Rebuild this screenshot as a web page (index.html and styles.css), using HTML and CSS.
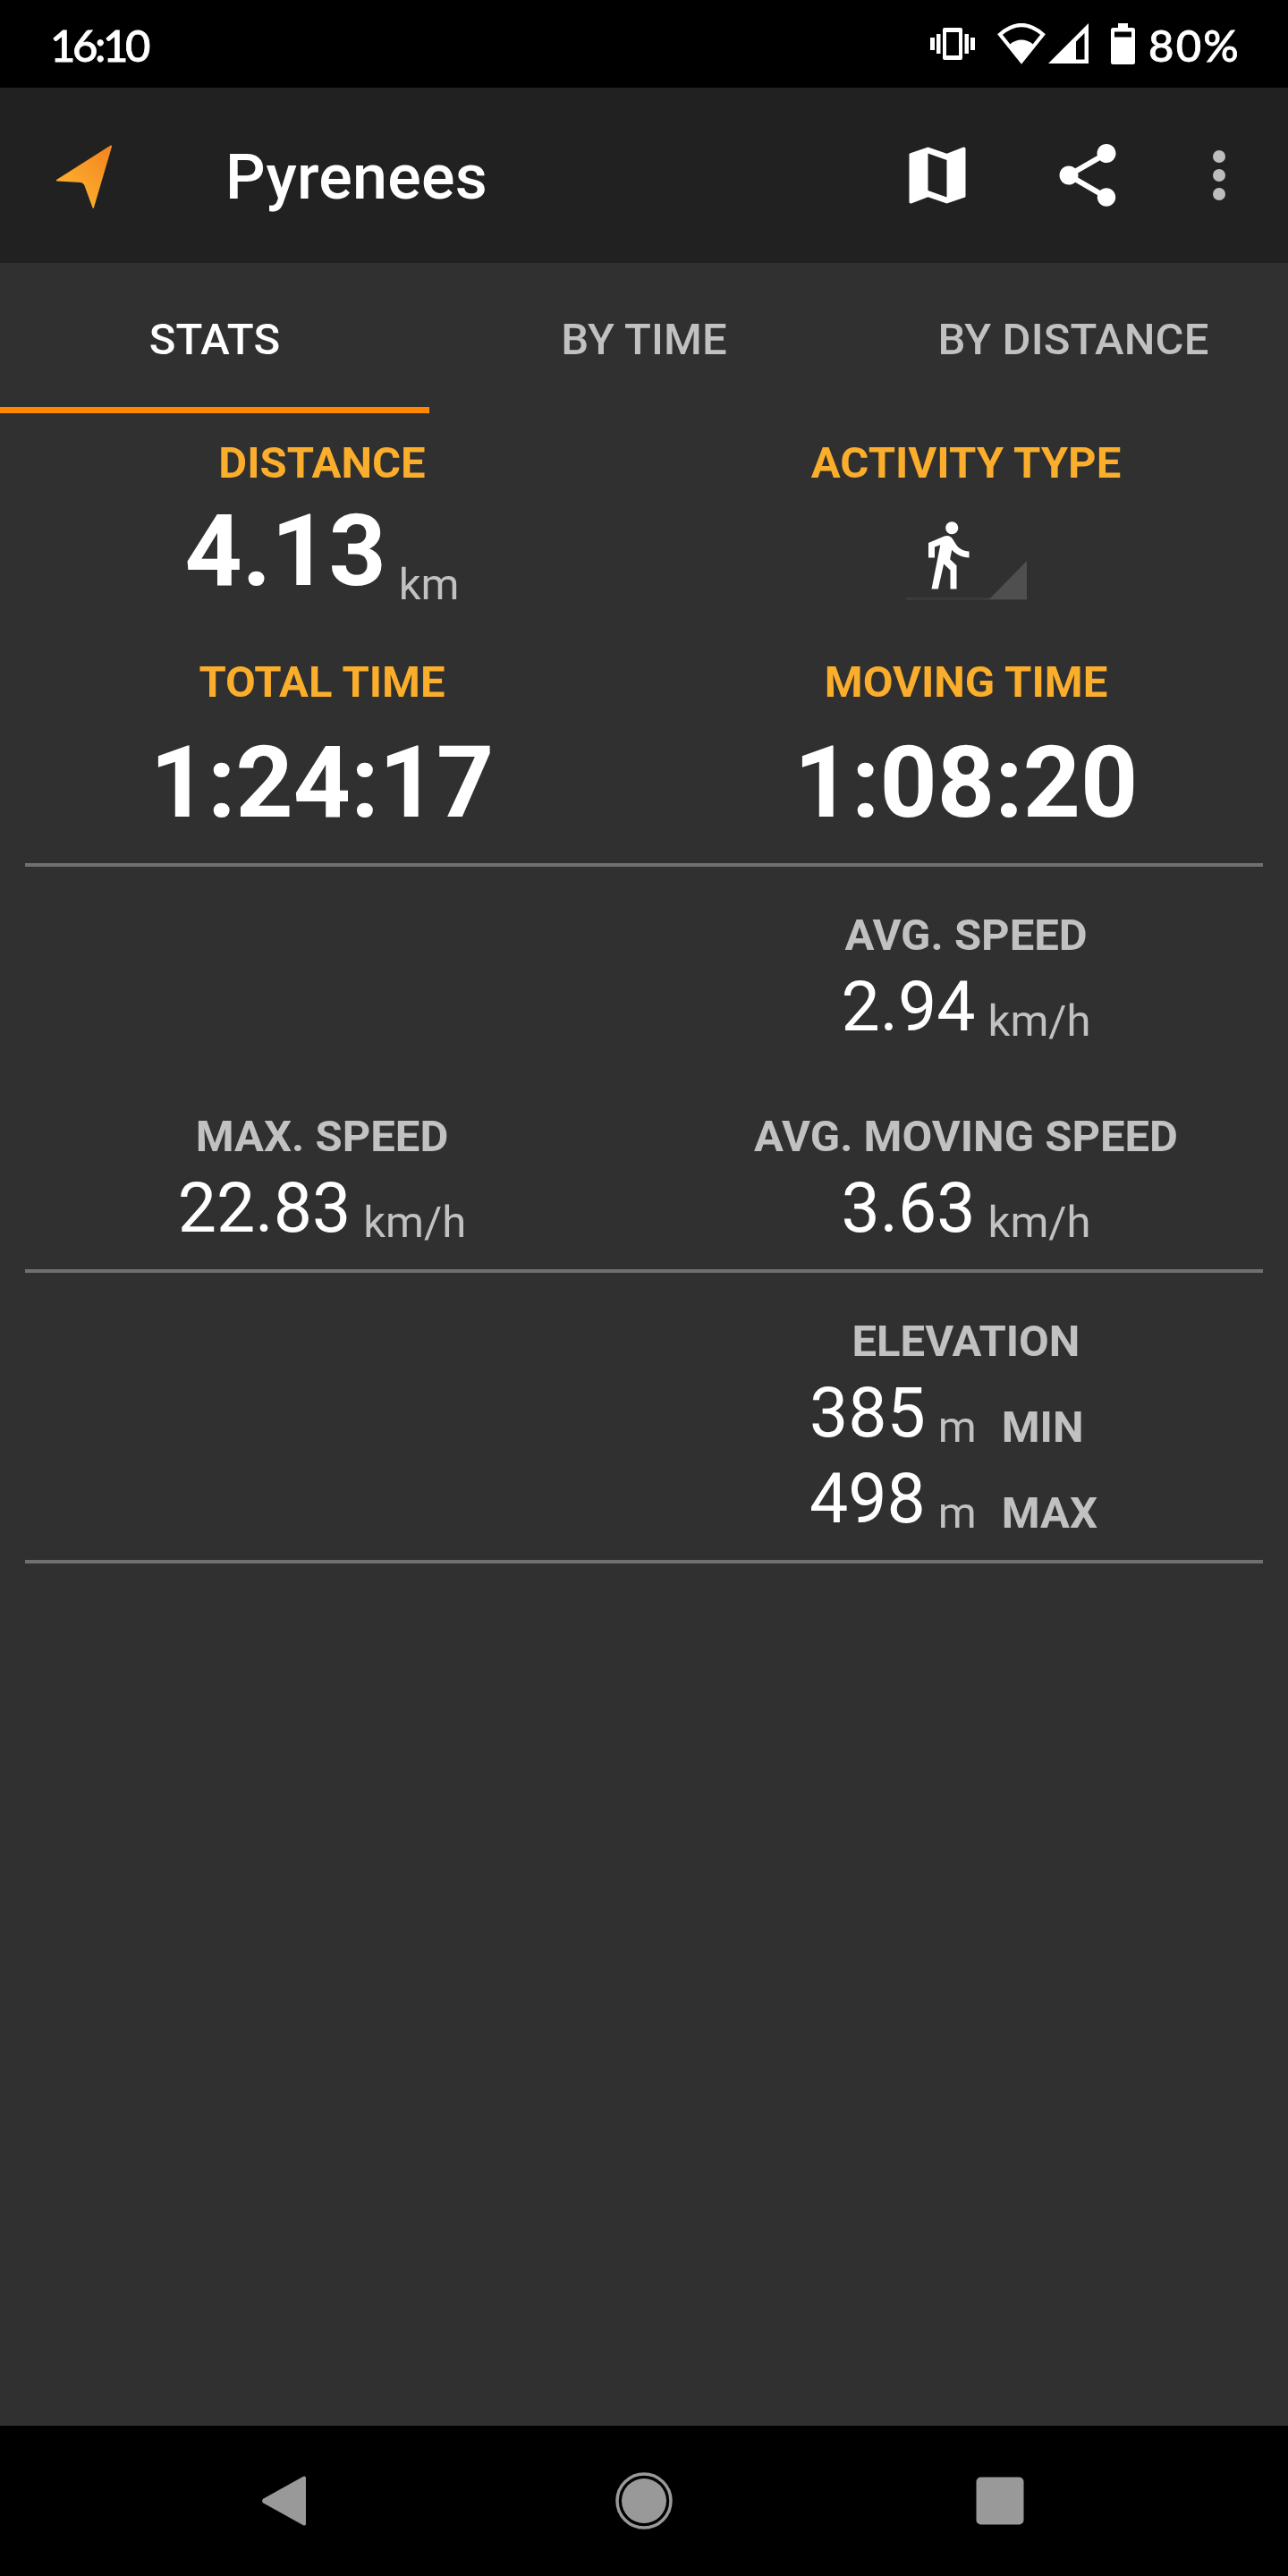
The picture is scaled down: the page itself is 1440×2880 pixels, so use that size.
FILE: index.html
```html
<!DOCTYPE html>
<html lang="en">
<head>
<meta charset="utf-8">
<title>Pyrenees</title>
<link rel="stylesheet" href="styles.css">
</head>
<body>
<div class="screen">
  <div class="status-bar">
    <span class="clock">16:10</span>
    <div class="status-icons">
      <svg class="icon-vibrate" width="50" height="36" viewBox="0 0 50 36" fill="#fff">
        <path fill-rule="evenodd" d="M16 0h18q2 0 2 2v32q0 2-2 2H16q-2 0-2-2V2q0-2 2-2zM18 5v26h14V5z"/>
        <path d="M0 11h5v14H0zM7 7h4.500v22H7zM38.500 7H43v22h-4.500zM45 11h5v14h-5z"/>
      </svg>
      <svg class="icon-wifi" width="54" height="46" viewBox="0 0 54 46">
        <path d="M3 12.500Q27-8.500 51 12.500L27 42.500z" fill="none" stroke="#fff" stroke-width="4.200"/>
        <path d="M14 23.500Q27 13.500 40 23.500L27 43z" fill="#fff"/>
      </svg>
      <svg class="icon-signal" width="45" height="45" viewBox="0 0 45 45">
        <path fill="#fff" fill-rule="evenodd" d="M45 0v45H0zM40.500 11L31 20.500V40.500h9.500z"/>
      </svg>
      <svg class="icon-battery" width="27" height="46" viewBox="0 0 27 46">
        <path fill="#fff" fill-rule="evenodd" d="M8 0h11v5h5.500Q27 5 27 7.500V43.500Q27 46 24.500 46h-22Q0 46 0 43.500v-36Q0 5 2.500 5H8zM4 9.500v6h19v-6z"/>
      </svg>
      <span class="battery-level">80%</span>
    </div>
  </div>

  <header class="app-bar">
    <svg class="icon-arrow" width="64" height="72" viewBox="0 0 64 72">
      <defs>
        <linearGradient id="arrow-fill" x1="1" y1="0" x2="0.350" y2="0.800">
          <stop offset="0" stop-color="#f5821f"/>
          <stop offset="1" stop-color="#fbad2e"/>
        </linearGradient>
      </defs>
      <path fill="url(#arrow-fill)" d="M61.300.800Q63.500-.300 63 2L43 70Q42.200 71.800 41.400 70L33 47Q31.800 42.500 28 42L2 40.500Q0 40 1.500 38.700z"/>
    </svg>
    <h1 class="title">Pyrenees</h1>
    <div class="actions">
      <svg width="84" height="84" viewBox="0 0 24 24" fill="#fff"><path d="M20.500 3l-.16.030L15 5.100 9 3 3.360 4.900c-.210.070-.360.250-.360.480V20.500c0 .280.220.500.500.500l.160-.030L9 18.900l6 2.100 5.640-1.900c.210-.070.360-.250.360-.480V3.500c0-.280-.220-.500-.500-.500zM15 19l-6-2.110V5l6 2.110V19z"/></svg>
      <svg width="84" height="84" viewBox="0 0 24 24" fill="#fff"><path d="M18 16.080c-.760 0-1.440.300-1.960.770L8.910 12.700c.050-.230.090-.460.090-.700s-.040-.470-.090-.700l7.050-4.110c.540.500 1.250.810 2.040.810 1.660 0 3-1.340 3-3s-1.340-3-3-3-3 1.340-3 3c0 .240.040.470.090.700L8.040 9.810C7.500 9.310 6.790 9 6 9c-1.660 0-3 1.340-3 3s1.340 3 3 3c.790 0 1.500-.310 2.040-.810l7.120 4.160c-.050.210-.080.430-.080.650 0 1.610 1.310 2.920 2.920 2.920 1.610 0 2.920-1.310 2.920-2.920s-1.310-2.920-2.920-2.920z"/></svg>
      <svg class="icon-more" width="14" height="56" viewBox="0 0 14 56" fill="#bdbdbd"><circle cx="7" cy="7" r="7"/><circle cx="7" cy="28" r="7"/><circle cx="7" cy="49" r="7"/></svg>
    </div>
  </header>

  <nav class="tabs">
    <span class="tab active">STATS</span>
    <span class="tab">BY TIME</span>
    <span class="tab">BY DISTANCE</span>
  </nav>

  <main class="stats">
    <section class="group primary">
      <div class="cell">
        <div class="label">DISTANCE</div>
        <div class="reading large"><span class="value">4.13</span><span class="unit">km</span></div>
      </div>
      <div class="cell">
        <div class="label">ACTIVITY TYPE</div>
        <div class="spinner">
          <svg class="walk" width="84" height="84" viewBox="0 0 24 24" fill="#fff"><path d="M13.500 5.500c1.100 0 2-.900 2-2s-.900-2-2-2-2 .900-2 2 .900 2 2 2zM9.800 8.900L7 23h2.100l1.800-8 2.100 2v6h2v-7.500l-2.100-2 .600-3C14.800 12 16.800 13 19 13v-2c-1.900 0-3.500-1-4.300-2.400l-1-1.600c-.400-.600-1-1-1.700-1-.300 0-.500.100-.800.100L6 8.300V13h2V9.600l1.800-.700"/></svg>
          <svg class="corner" width="42" height="43" viewBox="0 0 42 43" fill="#4f4f4f"><path d="M42 0v43H0z"/></svg>
        </div>
      </div>
      <div class="cell">
        <div class="label">TOTAL TIME</div>
        <div class="time">1:24:17</div>
      </div>
      <div class="cell">
        <div class="label">MOVING TIME</div>
        <div class="time">1:08:20</div>
      </div>
    </section>
    <hr class="divider">

    <section class="group">
      <div class="cell second">
        <div class="label">AVG. SPEED</div>
        <div class="reading"><span class="value">2.94</span><span class="unit">km/h</span></div>
      </div>
      <div class="cell">
        <div class="label">MAX. SPEED</div>
        <div class="reading"><span class="value">22.83</span><span class="unit">km/h</span></div>
      </div>
      <div class="cell">
        <div class="label">AVG. MOVING SPEED</div>
        <div class="reading"><span class="value">3.63</span><span class="unit">km/h</span></div>
      </div>
    </section>
    <hr class="divider">

    <section class="group">
      <div class="cell second">
        <div class="label">ELEVATION</div>
        <div class="range">
          <div class="reading"><span class="value">385</span><span class="unit">m</span><span class="bound">MIN</span></div>
          <div class="reading"><span class="value">498</span><span class="unit">m</span><span class="bound">MAX</span></div>
        </div>
      </div>
    </section>
    <hr class="divider">
  </main>

  <footer class="nav-bar">
    <svg width="64" height="64" viewBox="0 0 64 64"><path fill="#999" d="M4.500 29.500L49 4.800Q52 3.500 52 6.500v51Q52 60.500 49 59.200L4.500 34.500Q1.500 32 4.500 29.500z"/></svg>
    <svg width="64" height="64" viewBox="0 0 64 64"><circle cx="32" cy="32" r="30" fill="none" stroke="#999" stroke-width="3.500"/><circle cx="32" cy="32" r="25" fill="#999"/></svg>
    <svg width="64" height="64" viewBox="0 0 64 64"><rect x="5.500" y="5.500" width="53" height="53" rx="5" fill="#999"/></svg>
  </footer>
</div>
</body>
</html>
```
FILE: styles.css
```css
* {
  box-sizing: border-box;
}

body {
  margin: 0;
  background: #303030;
  color: #fff;
  font-family: Roboto, sans-serif;
}

svg {
  display: block;
  flex: none;
}

.screen {
  display: flex;
  flex-direction: column;
  width: 1440px;
  height: 2880px;
}

/* system status bar */
.status-bar {
  display: flex;
  justify-content: space-between;
  height: 98px;
  padding: 20px 53px 0 56px;
  background: #000;
  font: 500 49px/60px Lato, sans-serif;
  -webkit-text-stroke: 0.8px #fff;
}

.clock {
  letter-spacing: -3.4px;
}

.battery-level {
  letter-spacing: 2.2px;
}

.status-icons {
  display: flex;
  align-items: flex-start;
}

.icon-vibrate {
  margin: 11px 25px 0 0;
}

.icon-wifi {
  margin: 6px 3px 0 0;
}

.icon-signal {
  margin: 6px 25px 0 0;
}

.icon-battery {
  margin: 6px 15px 0 0;
}

/* app bar */
.app-bar {
  display: flex;
  align-items: center;
  height: 196px;
  padding: 0 70px 0 62px;
  background: #212121;
}

.icon-arrow {
  margin: 4px 126px 0 0;
}

.title {
  margin: 4px 0 0;
  font-size: 70px;
  font-weight: 500;
  line-height: 84px;
  letter-spacing: 0.25px;
}

.actions {
  display: flex;
  align-items: center;
  gap: 84px;
  margin-left: auto;
}

.icon-more {
  margin-left: 14px;
}

/* tabs */
.tabs {
  display: grid;
  grid-template-columns: repeat(3, 1fr);
  height: 168px;
  color: #c1c1c1;
  font-size: 49px;
  font-weight: 500;
  line-height: 58px;
  letter-spacing: 0.1px;
  text-align: center;
}

.tab {
  padding-top: 57px;
}

.tab.active {
  border-bottom: 7px solid #ff8800;
  color: #fff;
}

/* statistics */
.stats {
  flex: 1;
}

.group {
  display: grid;
  grid-template-columns: 1fr 1fr;
  row-gap: 71px;
  padding: 48px 0 23px;
}

.group.primary {
  row-gap: 51px;
  padding: 27px 0 24px;
}

.divider {
  height: 4px;
  margin: 0 28px;
  border: 0;
  background: #707070;
}

.cell {
  display: flex;
  flex-direction: column;
  align-items: center;
}

.cell.second {
  grid-column: 2;
}

.label,
.bound {
  color: #c1c1c1;
  font-size: 49px;
  font-weight: 700;
  line-height: 58px;
}

.primary .label {
  color: #fbad2c;
}

.reading {
  display: flex;
  align-items: flex-end;
  gap: 14px;
  height: 96px;
}

.value {
  font-size: 77px;
  line-height: 90px;
}

.unit {
  color: #c1c1c1;
  font-size: 49px;
  line-height: 58px;
}

.bound {
  margin-left: 14px;
}

.reading.large {
  height: 136px;
}

.large .value,
.time {
  font-size: 112px;
  font-weight: 700;
  line-height: 132px;
}

.large .value {
  margin-bottom: 1px;
}

.time {
  margin-top: 17px;
}

.range {
  padding-right: 28px;
}

.spinner {
  display: flex;
  align-items: flex-end;
  justify-content: space-between;
  width: 135px;
  height: 124px;
  border-bottom: 3px solid #3b3b3b;
}

.walk {
  margin: 0 0 6px 4px;
}

.corner {
  margin-bottom: -2px;
}

/* system navigation */
.nav-bar {
  display: flex;
  align-items: center;
  justify-content: space-between;
  height: 168px;
  padding: 0 290px;
  background: #000;
}
```
